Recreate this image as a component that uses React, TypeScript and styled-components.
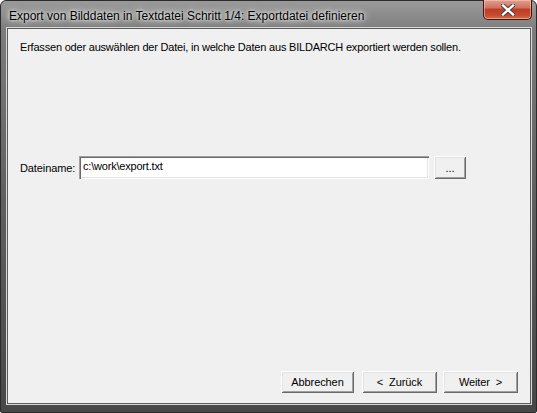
import React from "react";
import styled, { createGlobalStyle } from "styled-components";

const Global = createGlobalStyle`
  html, body { margin: 0; padding: 0; background: #ffffff; }
  body { width: 537px; height: 413px; overflow: hidden; }
`;

const Window = styled.div`
  box-sizing: border-box;
  width: 537px;
  height: 413px;
  display: flex;
  flex-direction: column;
  border: 1px solid #2b2b2b;
  border-radius: 6px 6px 2px 2px;
  background: linear-gradient(180deg, #9a9a9a 0px, #7c7c7c 30px, #5f5f5f 200px, #474747 413px);
  padding: 0 5px 8px 6px;
`;

const TitleBar = styled.div`
  height: 27px;
  display: flex;
  align-items: flex-start;
  justify-content: space-between;
`;

const Title = styled.div`
  font-family: "Liberation Sans", Arial, sans-serif;
  font-size: 12px;
  color: #000;
  padding: 8px 0 0 2px;
  text-shadow: 0 0 6px #e8e8e8, 0 0 10px #dcdcdc, 0 0 3px #ffffff;
  white-space: nowrap;
`;

const CloseButton = styled.div`
  box-sizing: border-box;
  width: 49px;
  height: 20px;
  margin-top: -1px;
  margin-right: -1px;
  border: 1px solid #4b1208;
  border-top: none;
  border-radius: 0 0 5px 5px;
  background: linear-gradient(180deg, #e0a090 0%, #cf7360 40%, #bf3d26 50%, #c44a30 80%, #d4704c 100%);
  box-shadow: inset 0 0 0 1px rgba(255, 210, 200, 0.5);
  display: flex;
  align-items: center;
  justify-content: center;
`;

const Client = styled.div`
  flex: 1;
  display: flex;
  flex-direction: column;
  background: #f0f0f0;
  border: 1px solid #5c5c5c;
  box-shadow: 0 0 0 1px #d8d8d8;
  font-family: "Liberation Sans", Arial, sans-serif;
  font-size: 11px;
  color: #000;
  padding: 0 12px 10px 12px;
`;

const Description = styled.div`
  margin-top: 12px;
  letter-spacing: -0.2px;
  white-space: nowrap;
`;

const FileRow = styled.div`
  margin-top: 103px;
  display: flex;
  align-items: center;
`;

const Label = styled.span`
  width: 59px;
  letter-spacing: -0.1px;
`;

const Input = styled.div`
  box-sizing: border-box;
  width: 350px;
  height: 23px;
  background: #fff;
  box-shadow: inset 1px 1px 0 #a0a0a0, inset 2px 2px 0 #696969, inset -1px -1px 0 #ffffff, inset -2px -2px 0 #e3e3e3;
  padding: 4px 3px 0 4px;
  white-space: nowrap;
  letter-spacing: -0.2px;
`;

const Button = styled.button<{ $w: number; $ml: number }>`
  box-sizing: border-box;
  width: ${(p) => p.$w}px;
  height: ${(p) => (p.$w < 40 ? 23 : 22)}px;
  margin-left: ${(p) => p.$ml}px;
  padding: 0;
  border: none;
  background: #f0f0f0;
  box-shadow: inset 1px 1px 0 #ffffff, inset -1px -1px 0 #696969, inset 2px 2px 0 #e3e3e3, inset -2px -2px 0 #a0a0a0;
  font-family: "Liberation Sans", Arial, sans-serif;
  font-size: 11px;
  color: #000;
  display: flex;
  align-items: center;
  justify-content: center;
  letter-spacing: -0.1px;
  white-space: pre;
`;

const Spacer = styled.div`
  flex: 1;
`;

const ButtonRow = styled.div`
  display: flex;
  justify-content: flex-end;
`;

export default function App() {
  return (
    <>
      <Global />
      <Window>
        <TitleBar>
          <Title>Export von Bilddaten in Textdatei Schritt 1/4: Exportdatei definieren</Title>
          <CloseButton>
            <svg width="14" height="12" viewBox="0 0 14 12">
              <path d="M2 1.5 L12 10.5 M12 1.5 L2 10.5" stroke="#3a3a3a" strokeWidth="4.2" strokeLinecap="square" />
              <path d="M2 1.5 L12 10.5 M12 1.5 L2 10.5" stroke="#ffffff" strokeWidth="2.4" strokeLinecap="square" />
            </svg>
          </CloseButton>
        </TitleBar>
        <Client>
          <Description>
            Erfassen oder auswählen der Datei, in welche Daten aus BILDARCH exportiert werden sollen.
          </Description>
          <FileRow>
            <Label>Dateiname:</Label>
            <Input>c:\work\export.txt</Input>
            <Button $w={32} $ml={5}>...</Button>
          </FileRow>
          <Spacer />
          <ButtonRow>
            <Button $w={73} $ml={0}>Abbrechen</Button>
            <Button $w={75} $ml={8}>{"<  Zurück"}</Button>
            <Button $w={75} $ml={6}>{"Weiter  >"}</Button>
          </ButtonRow>
        </Client>
      </Window>
    </>
  );
}
